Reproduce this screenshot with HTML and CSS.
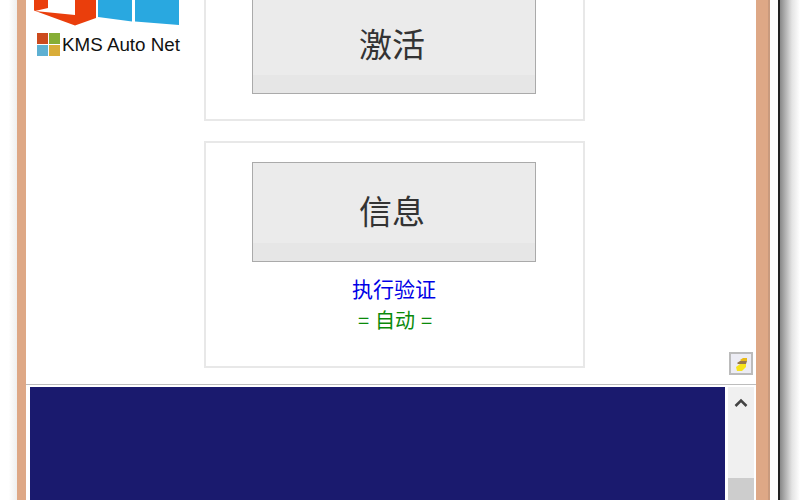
FILE: index.html
```html
<!DOCTYPE html>
<html lang="zh-hans">
<head>
    <meta charset="UTF-8">
    <title>KMS Auto Net</title>
    <link rel="stylesheet" href="styles.css">
</head>
<body>
<div class="screen">
    <div class="gutter"></div>
    <div class="window">
        <div class="main">
            <div class="brand">
                <svg class="logo" width="146" height="26" viewBox="0 0 146 26">
                    <polygon fill="#ea3e0c" points="0,0 62,0 62,18 41,25.500 0,10.500"/>
                    <polygon fill="#fff" points="14,0 41,0 41,15 1,11 14,8"/>
                    <polygon fill="#29a8e0" points="64,0 98,0 98,21.500 64,17"/>
                    <polygon fill="#29a8e0" points="101,0 145,0 145,25 101,21.500"/>
                </svg>
                <div class="product">
                    <svg class="squares" width="23" height="23" viewBox="0 0 23 23">
                        <rect x="0" y="0" width="11" height="11" fill="#cc4a1d"/>
                        <rect x="12" y="0" width="11" height="11" fill="#86ad35"/>
                        <rect x="0" y="12" width="11" height="11" fill="#5eb0d2"/>
                        <rect x="12" y="12" width="11" height="11" fill="#d9ad39"/>
                    </svg>
                    <span class="product-name">KMS Auto Net</span>
                </div>
            </div>
            <div class="cards">
                <div class="card">
                    <div class="big-btn">激活</div>
                </div>
                <div class="card">
                    <div class="big-btn">信息</div>
                    <p class="link">执行验证</p>
                    <p class="mode">= 自动 =</p>
                </div>
            </div>
            <div class="tool">
                <svg width="18" height="18" viewBox="0 0 18 18">
                    <polygon fill="#f7e31c" points="4,12 8,9 14,9 14,12 10,16 5,16"/>
                    <polygon fill="#e8b91a" points="8,5 11,3 15,3 15,6 9,6"/>
                    <polygon fill="#96774c" points="5,8 8,6 15,6 14,9 6,9"/>
                </svg>
            </div>
        </div>
        <div class="divider"></div>
        <div class="bottom">
            <div class="console"></div>
            <div class="scrollbar">
                <svg class="arrow" width="14" height="10" viewBox="0 0 14 10">
                    <polyline points="1.500,8 7,2.500 12.500,8" fill="none" stroke="#444" stroke-width="2.500"/>
                </svg>
                <div class="thumb"></div>
            </div>
        </div>
    </div>
    <div class="outside"></div>
</div>
</body>
</html>
```

FILE: styles.css
```css
* {
    box-sizing: border-box;
}

body {
    margin: 0;
    background-color: #fff;
    font-family: "Liberation Sans", "Noto Sans CJK SC", sans-serif;
}

.screen {
    display: flex;
    height: 500px;
    overflow: hidden;
}

.gutter {
    width: 17px;
    background: linear-gradient(to right, #fff 50%, #efefef);
}

.window {
    display: flex;
    flex-direction: column;
    width: 751px;
    background-color: #fff;
    border-left: 9px solid #dea886;
    border-right: 12px solid #dea886;
    box-shadow: 2px 0 0 #c99a7d;
}

.outside {
    flex: 1;
    margin-left: 10px;
    border-left: 2px solid #222;
    background: linear-gradient(to right, #888, #e4e4e4 60%, #fff);
}

.main {
    display: flex;
    height: 358px;
}

.brand {
    width: 178px;
    padding-left: 8px;
}

.logo {
    display: block;
}

.product {
    display: flex;
    align-items: center;
    margin: 7px 0 0 3px;
}

.product-name {
    margin-left: 2px;
    font-size: 18.800px;
    color: #111;
    white-space: nowrap;
}

.cards {
    width: 381px;
    margin-top: -27px;
}

.card {
    height: 148px;
    padding: 19px 47px 25px 46px;
    border: 2px solid #e8e8e8;
    text-align: center;
}

.card + .card {
    margin-top: 20px;
    height: 227px;
}

.big-btn {
    height: 100px;
    padding-right: 4px;
    line-height: 96px;
    font-family: "Noto Sans CJK SC", sans-serif;
    font-size: 33px;
    color: #333;
    background: linear-gradient(to bottom, #ebebeb calc(100% - 18px), #e6e6e6 calc(100% - 18px));
    border: 1.500px solid #aaa;
}

.card + .card .big-btn {
    line-height: 94px;
}

.link {
    margin: 11px 0 0;
    line-height: 30px;
    font-family: "Noto Sans CJK SC", sans-serif;
    font-size: 21px;
    color: #0000e6;
}

.mode {
    margin: 4px 0 0;
    padding-left: 2px;
    line-height: 26px;
    word-spacing: 1.500px;
    font-family: "Noto Sans CJK SC", sans-serif;
    font-size: 20px;
    color: #0a8a0a;
}

.tool {
    display: flex;
    align-items: center;
    justify-content: center;
    align-self: flex-end;
    width: 24px;
    height: 23px;
    margin: 0 0 -17px 144px;
    background-color: #ececf4;
    border: 2px solid #bbb;
}

.divider {
    height: 3px;
    margin-top: 26px;
    border-top: 1px solid #bdbdbd;
}

.bottom {
    flex: 1;
    display: flex;
    min-height: 0;
}

.console {
    width: 695px;
    margin-left: 4px;
    background-color: #1a1a6e;
}

.scrollbar {
    display: flex;
    flex-direction: column;
    align-items: center;
    width: 26px;
    margin-left: 3px;
    padding-top: 11px;
    background-color: #f0f0f0;
}

.arrow {
    display: block;
}

.thumb {
    align-self: stretch;
    height: 22px;
    margin-top: 70px;
    background-color: #cdcdcd;
}
```
